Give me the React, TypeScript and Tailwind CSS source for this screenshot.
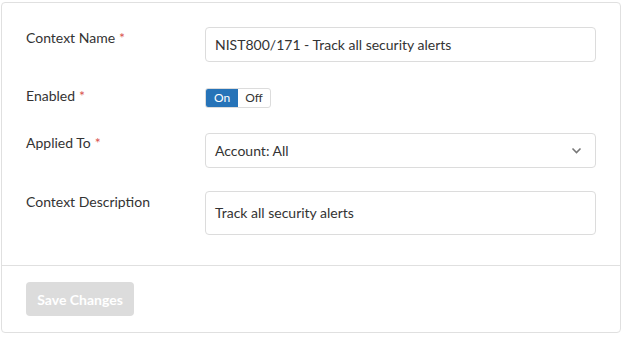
import React from "react";

const font = { fontFamily: "Lato, 'Liberation Sans', sans-serif" };

const Label = ({ text, required }: { text: string; required?: boolean }) => (
  <div className="w-[179px] shrink-0 text-[14px] leading-5 text-[#333]">
    {text}
    {required && <span className="ml-1 text-[#d9534f]">*</span>}
  </div>
);

const App = () => {
  return (
    <div className="w-[630px] h-[347px] bg-white pt-[2px] pl-[1px]" style={font}>
      <div className="w-[620px] h-[331px] rounded-[4px] border border-[#e0e0e0] flex flex-col">
        {/* Form body */}
        <div className="pl-[24px] pr-[24px] pt-[24px] h-[262px] flex flex-col">
          <div className="flex items-start">
            <div className="pt-[1px]">
              <Label text="Context Name" required />
            </div>
            <div className="flex-1 h-[35px] rounded-[4px] border border-[#dcdcdc] px-[9px] flex items-center text-[14px] text-[#333]">
              NIST800/171 - Track all security alerts
            </div>
          </div>

          <div className="flex items-start mt-[26px]">
            <div className="-mt-[2px]">
              <Label text="Enabled" required />
            </div>
            <div className="flex h-[20px] rounded-[3px] border border-[#dcdcdc] overflow-hidden text-[12px]">
              <div className="w-[32px] bg-[#2673b8] text-white flex items-center justify-center">On</div>
              <div className="w-[32px] text-[#333] flex items-center justify-center">Off</div>
            </div>
          </div>

          <div className="flex items-start mt-[25px]">
            <div className="pt-0">
              <Label text="Applied To" required />
            </div>
            <div className="flex-1 h-[35px] rounded-[4px] border border-[#dcdcdc] pl-[9px] pr-[13px] flex items-center justify-between text-[14px] text-[#333]">
              <span>Account: All</span>
              <svg width="11" height="7" viewBox="0 0 11 7" fill="none">
                <path d="M1.5 1.5 L5.5 5.5 L9.5 1.5" stroke="#777" strokeWidth="1.6" />
              </svg>
            </div>
          </div>

          <div className="flex items-start mt-[23px]">
            <div className="pt-[1px]">
              <Label text="Context Description" />
            </div>
            <div className="flex-1 h-[44px] rounded-[4px] border border-[#dcdcdc] px-[9px] pt-[11px] text-[14px] leading-5 text-[#333]">
              Track all security alerts
            </div>
          </div>
        </div>

        {/* Footer */}
        <div className="border-t border-[#e0e0e0] px-[24px] pt-[16px]">
          <button className="h-[34px] w-[108px] rounded-[4px] bg-[#dcdcdc] text-white text-[14px] font-bold">
            Save Changes
          </button>
        </div>
      </div>
    </div>
  );
};

export default App;
